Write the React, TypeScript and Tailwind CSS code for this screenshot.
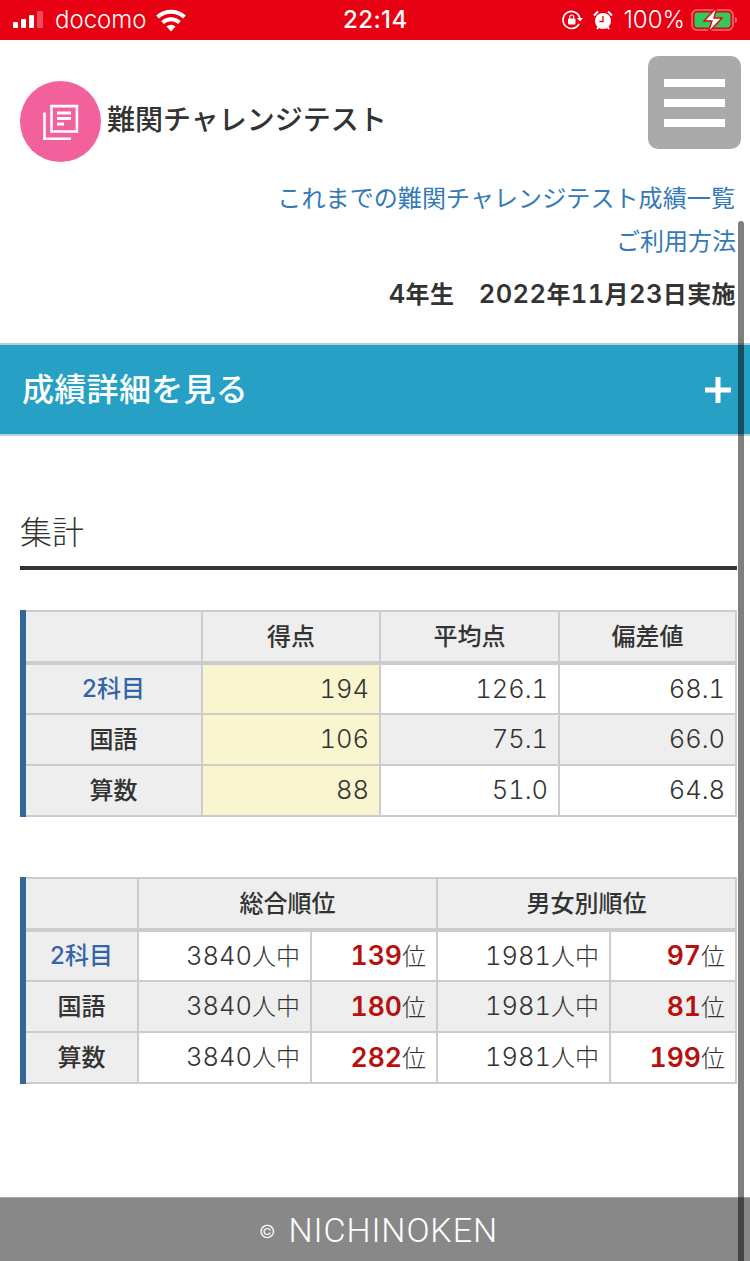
import React from 'react';

const rows1 = [
  { name: '2科目', score: '194', avg: '126.1', dev: '68.1', blue: true, shade: false },
  { name: '国語', score: '106', avg: '75.1', dev: '66.0', blue: false, shade: true },
  { name: '算数', score: '88', avg: '51.0', dev: '64.8', blue: false, shade: false },
];

const rows2 = [
  { name: '2科目', all: '139', sex: '97', blue: true, shade: false },
  { name: '国語', all: '180', sex: '81', blue: false, shade: true },
  { name: '算数', all: '282', sex: '199', blue: false, shade: false },
];

const th = 'border-2 border-[#ccc] bg-[#eee] font-medium text-center border-b-4 p-0';
const label = 'border-2 border-[#ccc] bg-[#eee] font-medium text-center p-0 h-[51px]';
const cell = 'border-2 border-[#ccc] text-right font-light pr-[10px] p-0 h-[51px]';

const Num: React.FC<{ children: React.ReactNode }> = ({ children }) => (
  <span className="text-[25.5px] tabular-nums">{children}</span>
);

const Rank: React.FC<{ children: React.ReactNode }> = ({ children }) => (
  <b className="font-semibold text-[#b80f0f] text-[26.5px] tabular-nums">{children}</b>
);

const StatusBar: React.FC = () => (
  <div className="h-10 bg-[#e60012] text-white flex items-center justify-between text-[24px] shrink-0 relative">
    <div className="flex items-center">
      <svg width="34" height="20" viewBox="0 0 34 20" className="ml-[12px]">
        <rect x="1" y="12" width="5" height="6" rx="1" fill="#fff" />
        <rect x="9" y="9" width="5" height="9" rx="1" fill="#fff" />
        <rect x="17" y="5" width="5" height="13" rx="1" fill="#fff" />
        <rect x="25" y="1" width="6" height="17" rx="1" fill="#fff" fillOpacity="0.3" />
      </svg>
      <span className="ml-[9px] font-light">docomo</span>
      <svg width="30" height="24" viewBox="0 0 30 24" className="ml-[9px]">
        <path d="M1.500 9a20 20 0 0 1 27 0" fill="none" stroke="#fff" strokeWidth="4" />
        <path d="M6.500 14.500a12.500 12.500 0 0 1 17 0" fill="none" stroke="#fff" strokeWidth="4" />
        <path d="M10.500 18.500a7 7 0 0 1 9 0L15 23.500z" fill="#fff" />
      </svg>
    </div>
    <span className="absolute left-[343px] font-medium tracking-[0.4px]">22:14</span>
    <div className="flex items-center mr-[12px]">
      <svg width="22" height="22" viewBox="0 0 22 22">
        <path d="M18 15a8.500 8.500 0 1 1 .8-6" fill="none" stroke="#fff" strokeWidth="1.600" />
        <path d="M16 9h6l-3 3.500z" fill="#fff" />
        <rect x="7" y="9.500" width="7.500" height="6" rx="1" fill="#fff" />
        <path d="M8.700 9.500V8a2 2 0 0 1 4 0v1.500" fill="none" stroke="#fff" strokeWidth="1.200" />
      </svg>
      <svg width="22" height="22" viewBox="0 0 22 22" className="ml-[9px]">
        <circle cx="11" cy="12" r="8" fill="#fff" />
        <path d="M11 7v5.500H7.500" fill="none" stroke="#e60012" strokeWidth="1.300" />
        <path d="M2 6.500 6 2.500M20 6.500l-4-4M5 20l1.500-2M17 20l-1.500-2" stroke="#fff" strokeWidth="2" />
      </svg>
      <span className="ml-[9px] font-light">100%</span>
      <svg width="47" height="30" viewBox="0 0 47 30" className="ml-[6px]">
        <rect x="1" y="5" width="41" height="20" rx="5" fill="none" stroke="#fff" strokeOpacity="0.45" strokeWidth="1.500" />
        <rect x="3.500" y="7.500" width="36" height="15" rx="3" fill="#34c759" />
        <path d="M44 12v6c1.500-.5 2-1.500 2-3s-.5-2.500-2-3z" fill="#fff" fillOpacity="0.45" />
        <path d="M26 2 13 16h8l-4 12 14-15h-8z" fill="#fff" stroke="#e60012" strokeWidth="1.400" />
      </svg>
    </div>
  </div>
);

export default function App() {
  return (
    <div className="relative w-[750px] h-[1261px] overflow-hidden bg-white flex flex-col text-[#333] font-['Inter','Noto_Sans_CJK_JP',sans-serif]">
      <StatusBar />

      <header className="h-[137px] flex justify-between shrink-0">
        <div className="flex items-center ml-5 mt-[41px] h-[81px]">
          <div className="w-[81px] h-[81px] rounded-full bg-[#f2619b] flex items-center justify-center">
            <svg width="36" height="36" viewBox="0 0 36 36" fill="none" stroke="#fff" strokeWidth="2.600">
              <path d="M8.500 2.100h25.400v25.400H8.500z" />
              <path d="M1.500 8.500v26.400h26.400" />
              <path d="M14 9h14M14 14.500h14M14 20h7" strokeWidth="3" />
            </svg>
          </div>
          <h1 className="ml-[6px] mb-1 text-[28px] font-medium leading-none">難関チャレンジテスト</h1>
        </div>
        <button className="mt-4 mr-[9px] w-[93px] h-[93px] rounded-[10px] bg-[#aaa] flex flex-col items-center justify-center gap-3">
          <span className="block w-[61px] h-2 bg-white" />
          <span className="block w-[61px] h-2 bg-white" />
          <span className="block w-[61px] h-2 bg-white" />
        </button>
      </header>

      <div className="pr-[14px] text-right text-[24px] shrink-0">
        <a className="block text-[#337ab7] leading-[44px] tracking-[0.1px] pr-px">これまでの難関チャレンジテスト成績一覧</a>
        <a className="block text-[#337ab7] leading-[42px]">ご利用方法</a>
        <p className="mt-[9px] font-semibold h-[44px] leading-[44px] tracking-[0.4px]"><Num>4</Num>年生　<Num>2022</Num>年<Num>11</Num>月<Num>23</Num>日実施</p>
      </div>

      <div className="mt-[27px] h-[93px] bg-[#26a1c5] border-y-2 border-[#b7d0d9] flex items-center justify-between pl-[22px] pr-[19px] text-white shrink-0">
        <span className="text-[32px] font-medium leading-none tracking-[0.3px]">成績詳細を見る</span>
        <svg width="26" height="26" viewBox="0 0 26 26" fill="#fff">
          <rect x="0" y="10.500" width="26" height="5" />
          <rect x="10.500" y="0" width="5" height="26" />
        </svg>
      </div>

      <section className="px-5 pr-[13px] shrink-0">
        <h2 className="mt-[73px] pb-[9px] text-[32px] leading-[48px] font-light border-b-4 border-[#333]">集計</h2>

        <div className="mt-[40px] border-l-[6px] border-[#336699] text-[24px]">
          <table className="w-full table-fixed border-collapse">
            <colgroup>
              <col className="w-[176px]" />
              <col className="w-[178px]" />
              <col className="w-[179px]" />
              <col />
            </colgroup>
            <thead>
              <tr className="h-[52px]">
                <th className={th + ' border-l-0'}></th>
                <th className={th}>得点</th>
                <th className={th}>平均点</th>
                <th className={th}>偏差値</th>
              </tr>
            </thead>
            <tbody>
              {rows1.map((r) => (
                <tr key={r.name}>
                  <th className={label + ' border-l-0' + (r.blue ? ' text-[#3465a8]' : '')}>{r.name}</th>
                  <td className={cell + ' bg-[#f9f5cf]'}><Num>{r.score}</Num></td>
                  <td className={cell + (r.shade ? ' bg-[#eee]' : '')}><Num>{r.avg}</Num></td>
                  <td className={cell + (r.shade ? ' bg-[#eee]' : '')}><Num>{r.dev}</Num></td>
                </tr>
              ))}
            </tbody>
          </table>
        </div>

        <div className="mt-[60px] border-l-[6px] border-[#336699] text-[24px]">
          <table className="w-full table-fixed border-collapse">
            <colgroup>
              <col className="w-[112px]" />
              <col className="w-[173px]" />
              <col className="w-[126px]" />
              <col className="w-[173px]" />
              <col />
            </colgroup>
            <thead>
              <tr className="h-[52px]">
                <th className={th + ' border-l-0'}></th>
                <th className={th} colSpan={2}>総合順位</th>
                <th className={th} colSpan={2}>男女別順位</th>
              </tr>
            </thead>
            <tbody>
              {rows2.map((r) => {
                const bg = r.shade ? ' bg-[#eee]' : '';
                return (
                  <tr key={r.name}>
                    <th className={label + ' border-l-0' + (r.blue ? ' text-[#3465a8]' : '')}>{r.name}</th>
                    <td className={cell + bg}><Num>3840</Num>人中</td>
                    <td className={cell + bg}><Rank>{r.all}</Rank>位</td>
                    <td className={cell + bg}><Num>1981</Num>人中</td>
                    <td className={cell + bg}><Rank>{r.sex}</Rank>位</td>
                  </tr>
                );
              })}
            </tbody>
          </table>
        </div>
      </section>

      <footer className="mt-auto h-[64px] pl-[7px] bg-[#888] border-t border-[#aaa] text-white flex items-center justify-center shrink-0">
        <span className="text-[18px] font-light mt-[3px] mr-[13px]">©</span>
        <span className="text-[34px] font-light font-['Roboto',sans-serif] leading-none tracking-[0.9px]">NICHINOKEN</span>
      </footer>

      {/* overlay scrollbar */}
      <div className="absolute left-[738px] top-[221px] bottom-0 w-[6px] rounded-t-[3px] bg-black/50" />
    </div>
  );
}
